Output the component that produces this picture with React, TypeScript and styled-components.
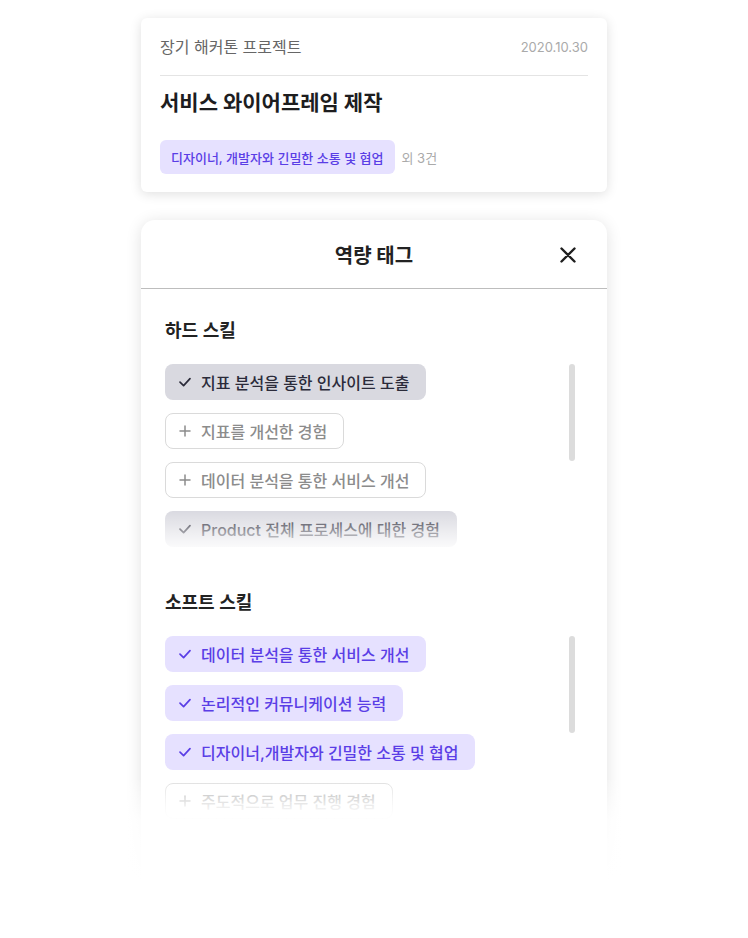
import React from 'react';
import styled, { createGlobalStyle } from 'styled-components';

const GlobalStyle = createGlobalStyle`
  html, body {
    margin: 0;
    padding: 0;
    background: #fff;
  }
  body {
    font-family: Inter, 'Noto Sans CJK KR', 'Noto Sans', sans-serif;
    -webkit-font-smoothing: antialiased;
  }
`;

const Page = styled.div`
  position: relative;
  width: 748px;
  height: 938px;
  overflow: hidden;
  display: flex;
  flex-direction: column;
  align-items: center;
  gap: 28px;
  padding-top: 18px;
  box-sizing: border-box;
`;

const BottomFade = styled.div`
  position: absolute;
  left: 0;
  right: 0;
  top: 780px;
  bottom: 0;
  background: linear-gradient(
    to bottom,
    rgba(255, 255, 255, 0.15) 0px,
    rgba(255, 255, 255, 0.85) 40px,
    #fff 100px
  );
  pointer-events: none;
`;

const ProjectCard = styled.div`
  width: 466px;
  box-sizing: border-box;
  padding: 18px 19px;
  background: #fff;
  border-radius: 6px;
  box-shadow: 0 2px 12px rgba(0, 0, 0, 0.13);
`;

const CardHeader = styled.div`
  display: flex;
  justify-content: space-between;
  align-items: center;
  padding-bottom: 17px;
  border-bottom: 1px solid #e4e4e4;
  .category {
    font-size: 16px;
    line-height: 22px;
    color: #666;
  }
  .date {
    font-size: 13px;
    line-height: 22px;
    color: #aaa;
  }
`;

const CardTitle = styled.h2`
  margin: 12px 0 22px;
  font-size: 21px;
  line-height: 30px;
  font-weight: 700;
  color: #1d1d1f;
`;

const CardTags = styled.div`
  display: flex;
  align-items: center;
  gap: 7px;
  .more {
    font-size: 13px;
    color: #aaa;
  }
`;

const SmallTag = styled.span`
  display: inline-flex;
  align-items: center;
  height: 34px;
  padding: 0 11px;
  border-radius: 6px;
  background: #e6e1ff;
  color: #5a3ee6;
  font-size: 13px;
  font-weight: 500;
`;

const Modal = styled.div`
  flex: 1;
  width: 466px;
  background: #fff;
  border-radius: 14px 14px 0 0;
  box-shadow: 0 2px 16px rgba(0, 0, 0, 0.12);
`;

const ModalHeader = styled.div`
  position: relative;
  height: 68px;
  display: flex;
  align-items: center;
  justify-content: center;
  border-bottom: 1px solid #bdbdbd;
  h1 {
    margin: 0;
    font-size: 20px;
    font-weight: 700;
    color: #222;
  }
`;

const CloseButton = styled.button`
  position: absolute;
  right: 30px;
  top: 26px;
  width: 18px;
  height: 18px;
  padding: 0;
  border: 0;
  background: none;
  cursor: pointer;
`;

const ModalBody = styled.div`
  padding: 30px 24px 0;
  display: flex;
  flex-direction: column;
  gap: 37px;
`;

const SectionTitle = styled.h3`
  margin: 0 0 21px;
  font-size: 18px;
  line-height: 24px;
  font-weight: 600;
  color: #222;
`;

const TagList = styled.div`
  position: relative;
  height: 190px;
  overflow: hidden;
  &::after {
    content: '';
    position: absolute;
    left: 0;
    right: 0;
    bottom: 0;
    height: 44px;
    background: linear-gradient(to bottom, rgba(255, 255, 255, 0), rgba(255, 255, 255, 0.75) 70%, #fff);
    pointer-events: none;
  }
`;

const TagStack = styled.div`
  display: flex;
  flex-direction: column;
  align-items: flex-start;
  gap: 13px;
`;

const ScrollThumb = styled.div`
  position: absolute;
  right: 8px;
  top: 0;
  width: 6px;
  height: 97px;
  border-radius: 3px;
  background: #dcdcdc;
`;

type Variant = 'gray' | 'purple' | 'outline';

const Chip = styled.div<{ $variant: Variant }>`
  display: inline-flex;
  align-items: center;
  gap: 9px;
  height: 36px;
  box-sizing: border-box;
  padding: 0 16px 0 12px;
  border-radius: 8px;
  font-size: 16px;
  font-weight: 500;
  white-space: nowrap;
  background: ${p => (p.$variant === 'gray' ? '#d9d9e0' : p.$variant === 'purple' ? '#e6e1ff' : '#fff')};
  color: ${p => (p.$variant === 'gray' ? '#2b2b3a' : p.$variant === 'purple' ? '#5a3ee6' : '#8c8c8c')};
  border: 1px solid ${p => (p.$variant === 'outline' ? '#dadada' : 'transparent')};
  svg {
    flex-shrink: 0;
  }
`;

const CheckIcon = () => (
  <svg width="14" height="14" viewBox="0 0 14 14" fill="none">
    <path d="M2 7.2 L5.6 10.6 L12 3.6" stroke="currentColor" strokeWidth="1.7" strokeLinecap="round" strokeLinejoin="round" />
  </svg>
);

const PlusIcon = () => (
  <svg width="14" height="14" viewBox="0 0 14 14" fill="none">
    <path d="M7 2 V12 M2 7 H12" stroke="currentColor" strokeWidth="1.5" strokeLinecap="round" />
  </svg>
);

const CloseIcon = () => (
  <svg width="18" height="18" viewBox="0 0 18 18" fill="none">
    <path d="M2.5 2.5 L15.5 15.5 M15.5 2.5 L2.5 15.5" stroke="#1e1e1e" strokeWidth="2.4" strokeLinecap="round" />
  </svg>
);

type Skill = { label: string; variant: Variant };

const hardSkills: Skill[] = [
  { label: '지표 분석을 통한 인사이트 도출', variant: 'gray' },
  { label: '지표를 개선한 경험', variant: 'outline' },
  { label: '데이터 분석을 통한 서비스 개선', variant: 'outline' },
  { label: 'Product 전체 프로세스에 대한 경험', variant: 'gray' },
];

const softSkills: Skill[] = [
  { label: '데이터 분석을 통한 서비스 개선', variant: 'purple' },
  { label: '논리적인 커뮤니케이션 능력', variant: 'purple' },
  { label: '디자이너,개발자와 긴밀한 소통 및 협업', variant: 'purple' },
  { label: '주도적으로 업무 진행 경험', variant: 'outline' },
];

const SkillSection = ({ title, skills }: { title: string; skills: Skill[] }) => (
  <div>
    <SectionTitle>{title}</SectionTitle>
    <TagList>
      <TagStack>
        {skills.map(s => (
          <Chip key={s.label} $variant={s.variant}>
            {s.variant === 'outline' ? <PlusIcon /> : <CheckIcon />}
            {s.label}
          </Chip>
        ))}
      </TagStack>
      <ScrollThumb />
    </TagList>
  </div>
);

export default function App() {
  return (
    <>
      <GlobalStyle />
      <Page>
        <ProjectCard>
          <CardHeader>
            <span className="category">장기 해커톤 프로젝트</span>
            <span className="date">2020.10.30</span>
          </CardHeader>
          <CardTitle>서비스 와이어프레임 제작</CardTitle>
          <CardTags>
            <SmallTag>디자이너, 개발자와 긴밀한 소통 및 협업</SmallTag>
            <span className="more">외 3건</span>
          </CardTags>
        </ProjectCard>
        <Modal>
          <ModalHeader>
            <h1>역량 태그</h1>
            <CloseButton aria-label="닫기">
              <CloseIcon />
            </CloseButton>
          </ModalHeader>
          <ModalBody>
            <SkillSection title="하드 스킬" skills={hardSkills} />
            <SkillSection title="소프트 스킬" skills={softSkills} />
          </ModalBody>
        </Modal>
        <BottomFade />
      </Page>
    </>
  );
}
